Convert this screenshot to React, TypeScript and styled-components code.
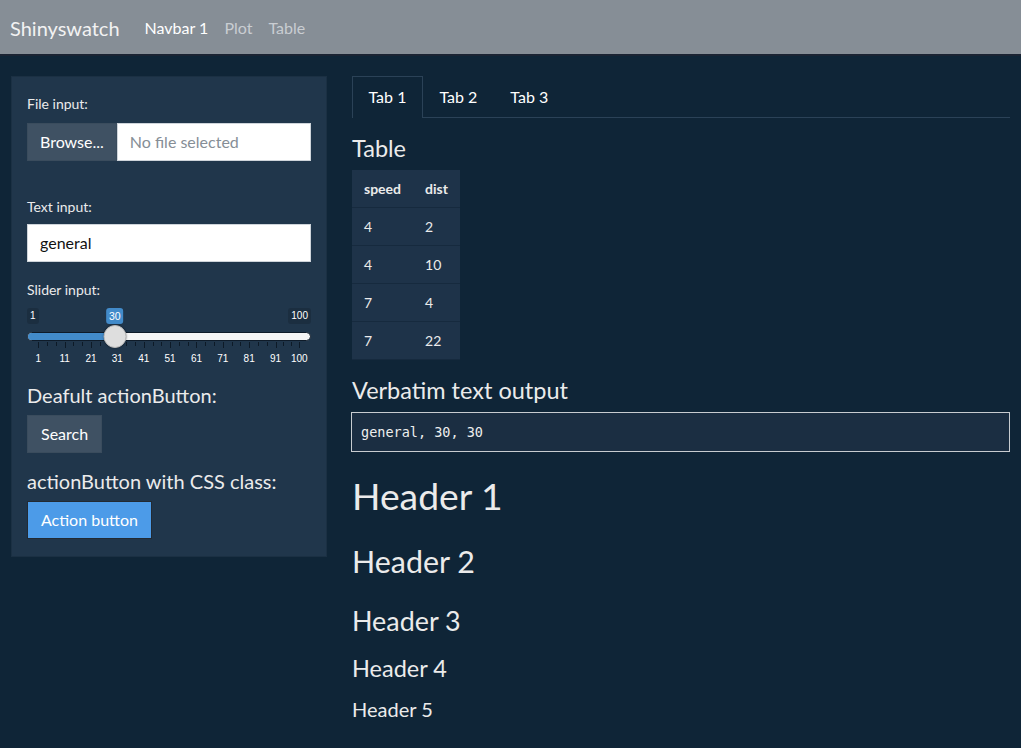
import React from "react";
import styled, { createGlobalStyle } from "styled-components";

const Global = createGlobalStyle`
  html, body { margin: 0; padding: 0; background: #0f2537; }
  body { font-family: Lato, "Noto Sans", sans-serif; color: #ebebeb; font-size: 16px; line-height: 1.5; }
  * { box-sizing: border-box; }
`;

const Navbar = styled.nav`
  height: 56px;
  background: #868e96;
  border-bottom: 2px solid #1b2433;
  display: flex;
  align-items: center;
  padding: 1px 10px 0 10px;
`;
const Brand = styled.div`
  font-size: 20px;
  color: #f2f2f2;
  margin-right: 25px;
`;
const NavLink = styled.span<{ $active?: boolean }>`
  font-size: 16px;
  color: ${(p) => (p.$active ? "#ffffff" : "#c9cdd2")};
  margin-right: 16px;
`;

const Page = styled.div`
  display: flex;
  gap: 24px;
  padding: 20px 11px 0 11px;
  align-items: flex-start;
`;

const Well = styled.div`
  flex: 0 0 316px;
  background: #20364b;
  border: 1px solid #1b3043;
  padding: 14px 15px 17px 15px;
  display: flex;
  flex-direction: column;
`;

const Group = styled.div<{ $mb?: number }>`
  display: flex;
  flex-direction: column;
  margin-bottom: ${(p) => p.$mb ?? 16}px;
`;
const Label = styled.label<{ $mb?: number }>`
  font-size: 14px;
  line-height: 21px;
  margin: 2px 0 ${(p) => p.$mb ?? 7}px 0;
  color: #ebebeb;
`;

const FileRow = styled.div`
  display: flex;
  height: 38px;
`;
const BrowseBtn = styled.span`
  background: #3f5163;
  color: #fff;
  padding: 6px 12px;
  font-size: 16px;
  line-height: 24px;
  border: 1px solid #3a4c5d;
`;
const TextBox = styled.div<{ $placeholder?: boolean }>`
  flex: 1;
  background: #fff;
  border: 1px solid #ced4da;
  padding: 6px 12px;
  font-size: 16px;
  line-height: 24px;
  height: 38px;
  color: ${(p) => (p.$placeholder ? "#868e96" : "#111")};
`;

const SliderWrap = styled.div`
  position: relative;
  height: 73px;
  font-family: "Liberation Sans", Arial, sans-serif;
`;
const SideTag = styled.span<{ $right?: boolean }>`
  position: absolute;
  top: 0;
  ${(p) => (p.$right ? "right: 0;" : "left: 0;")}
  font-size: 10px;
  line-height: 14px;
  padding: 1px 3px;
  border-radius: 3px;
  background: #1b2e40;
  color: #ffffff;
`;
const ValueTag = styled.span`
  position: absolute;
  top: 0;
  transform: translateX(-50%);
  font-size: 10.5px;
  line-height: 14px;
  padding: 1px 3px;
  border-radius: 3px;
  background: #428bca;
  color: #fff;
`;
const Track = styled.div`
  position: absolute;
  left: 0;
  right: 0;
  top: 24px;
  height: 9px;
  border-radius: 5px;
  background: #f5f5f5;
  border: 1px solid #0e1b29;
  overflow: hidden;
`;
const Fill = styled.div`
  height: 100%;
  background: #428bca;
`;
const Handle = styled.div`
  position: absolute;
  top: 17px;
  width: 23px;
  height: 23px;
  border-radius: 50%;
  background: #dedede;
  border: 1px solid #b8b8b8;
  box-shadow: 0 0 2px rgba(0, 0, 0, 0.4);
  transform: translateX(-50%);
`;
const Tick = styled.span<{ $major?: boolean }>`
  position: absolute;
  top: 34px;
  width: 1px;
  height: ${(p) => (p.$major ? 6 : 4)}px;
  background: #0d1a27;
`;
const GridLabel = styled.span`
  position: absolute;
  top: 45px;
  transform: translateX(-50%);
  font-size: 10px;
  line-height: 12px;
  color: #ffffff;
`;

const SubHead = styled.h5<{ $mt?: number }>`
  font-size: 20px;
  line-height: 24px;
  font-weight: 400;
  margin: ${(p) => p.$mt ?? 0}px 0 8px 0;
`;
const Btn = styled.button<{ $info?: boolean }>`
  align-self: flex-start;
  font-family: Lato, sans-serif;
  font-size: 16px;
  line-height: 24px;
  height: 38px;
  padding: 6px 13px;
  color: #fff;
  background: ${(p) => (p.$info ? "#4c9be8" : "#3f5163")};
  border: 1px solid ${(p) => (p.$info ? "#222a33" : "#3a4c5d")};
  border-radius: 0;
`;

const Main = styled.div`
  flex: 1;
  display: flex;
  flex-direction: column;
`;
const Tabs = styled.div`
  display: flex;
  border-bottom: 1px solid #2b4257;
  margin-left: 1px;
`;
const Tab = styled.span<{ $active?: boolean }>`
  padding: 8px 15.5px;
  font-size: 16px;
  line-height: 24px;
  color: #fff;
  border: 1px solid ${(p) => (p.$active ? "#2b4257" : "transparent")};
  border-bottom: none;
  margin-bottom: ${(p) => (p.$active ? "-1px" : "0")};
  background: ${(p) => (p.$active ? "#0f2537" : "transparent")};
`;
const H4 = styled.h4<{ $mt?: number }>`
  font-size: 23.5px;
  line-height: 28px;
  font-weight: 400;
  margin: ${(p) => p.$mt ?? 0}px 0 8px 1px;
`;
const Table = styled.table`
  border-collapse: collapse;
  align-self: flex-start;
  margin-left: 1px;
  font-size: 14px;
  line-height: 21px;
`;
const Th = styled.th`
  text-align: left;
  font-weight: 700;
  padding: 8px 12px;
  background: #1e3349;
  border-bottom: 1px solid #162a3e;
`;
const Td = styled.td`
  padding: 8px 12px;
  background: #1e3349;
  border-bottom: 1px solid #162a3e;
`;
const Pre = styled.pre`
  margin: 0;
  border: 1px solid #c8ccd0;
  background: #1b2e42;
  height: 40px;
  padding: 0 9px;
  display: flex;
  align-items: center;
  font-family: "DejaVu Sans Mono", monospace;
  font-size: 13.5px;
  color: #eeeeee;
`;
const Heading = styled.div<{ $size: number; $mt: number }>`
  font-size: ${(p) => p.$size}px;
  line-height: 1.2;
  margin: ${(p) => p.$mt}px 0 0 1px;
  font-weight: 400;
`;

const gridPos = (v: number) => 11.3 + (v - 1) * 2.636;

function Slider() {
  const majors = [1, 11, 21, 31, 41, 51, 61, 71, 81, 91, 100];
  const ticks: { x: number; major: boolean }[] = [];
  for (let i = 0; i < majors.length; i++) {
    ticks.push({ x: gridPos(majors[i]), major: true });
    if (i < majors.length - 1) {
      const a = gridPos(majors[i]);
      const b = gridPos(majors[i + 1]);
      ticks.push({ x: a + (b - a) / 3, major: false });
      ticks.push({ x: a + (2 * (b - a)) / 3, major: false });
    }
  }
  const handleX = gridPos(30);
  return (
    <SliderWrap>
      <SideTag>1</SideTag>
      <SideTag $right>100</SideTag>
      <ValueTag style={{ left: handleX }}>30</ValueTag>
      <Track>
        <Fill style={{ width: handleX }} />
      </Track>
      {ticks.map((t, i) => (
        <Tick key={i} $major={t.major} style={{ left: t.x }} />
      ))}
      {majors.map((m) => (
        <GridLabel key={m} style={{ left: gridPos(m) }}>
          {m}
        </GridLabel>
      ))}
      <Handle style={{ left: handleX }} />
    </SliderWrap>
  );
}

const rows = [
  [4, 2],
  [4, 10],
  [7, 4],
  [7, 22],
];

export default function App() {
  return (
    <>
      <Global />
      <Navbar>
        <Brand>Shinyswatch</Brand>
        <NavLink $active>Navbar 1</NavLink>
        <NavLink>Plot</NavLink>
        <NavLink>Table</NavLink>
      </Navbar>
      <Page>
        <Well>
          <Group $mb={33}>
            <Label $mb={9}>File input:</Label>
            <FileRow>
              <BrowseBtn>Browse...</BrowseBtn>
              <TextBox $placeholder>No file selected</TextBox>
            </FileRow>
          </Group>
          <Group $mb={15}>
            <Label $mb={7}>Text input:</Label>
            <TextBox>general</TextBox>
          </Group>
          <Group $mb={0}>
            <Label $mb={8}>Slider input:</Label>
            <Slider />
          </Group>
          <SubHead $mt={2}>Deafult actionButton:</SubHead>
          <Btn>Search</Btn>
          <SubHead $mt={16}>actionButton with CSS class:</SubHead>
          <Btn $info>Action button</Btn>
        </Well>
        <Main>
          <Tabs>
            <Tab $active>Tab 1</Tab>
            <Tab>Tab 2</Tab>
            <Tab>Tab 3</Tab>
          </Tabs>
          <H4 $mt={16}>Table</H4>
          <Table>
            <thead>
              <tr>
                <Th>speed</Th>
                <Th>dist</Th>
              </tr>
            </thead>
            <tbody>
              {rows.map((r, i) => (
                <tr key={i}>
                  <Td>{r[0]}</Td>
                  <Td>{r[1]}</Td>
                </tr>
              ))}
            </tbody>
          </Table>
          <H4 $mt={16}>Verbatim text output</H4>
          <Pre>general, 30, 30</Pre>
          <Heading as="h1" $size={37.3} $mt={22}>Header 1</Heading>
          <Heading as="h2" $size={30.4} $mt={24}>Header 2</Heading>
          <Heading as="h3" $size={26.9} $mt={26}>Header 3</Heading>
          <Heading as="h4" $size={23.5} $mt={16}>Header 4</Heading>
          <Heading as="h5" $size={20} $mt={15}>Header 5</Heading>
        </Main>
      </Page>
    </>
  );
}
